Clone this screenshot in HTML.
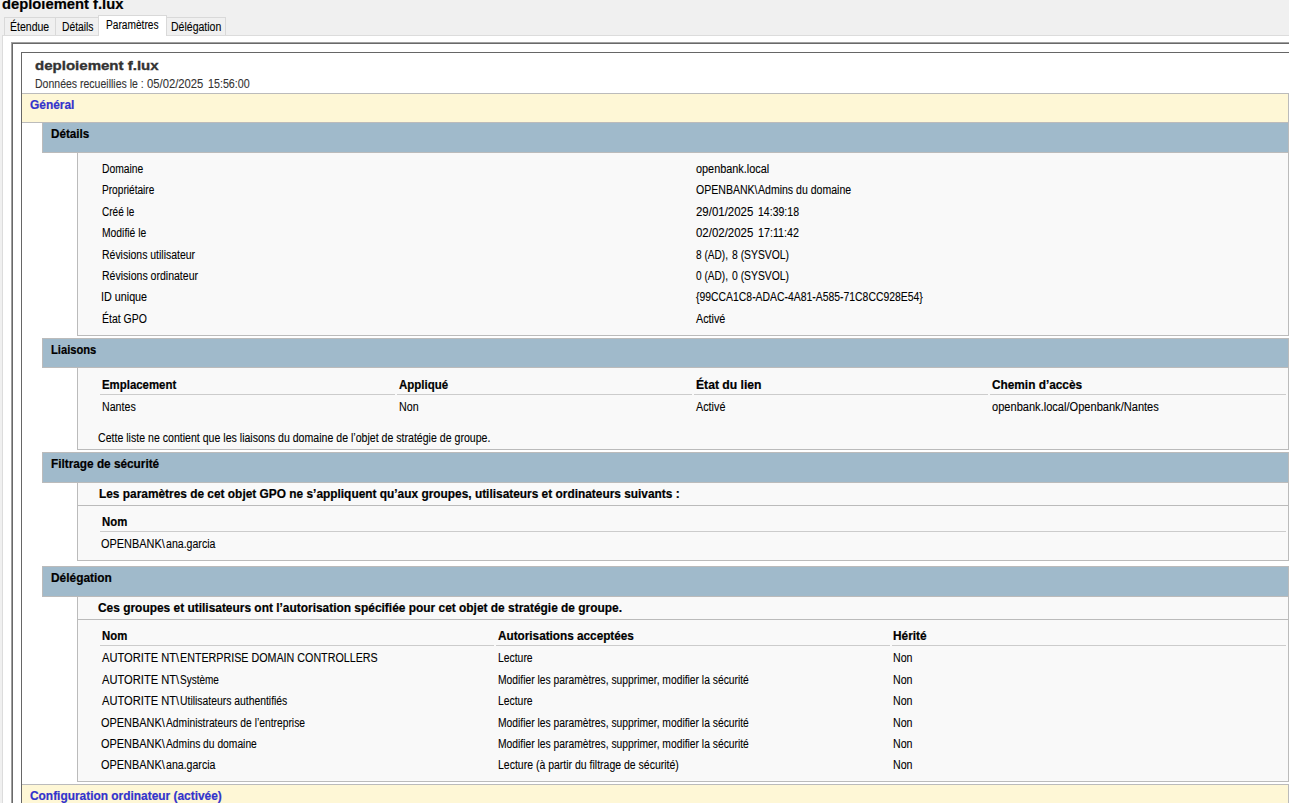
<!DOCTYPE html>
<html lang="fr">
<head>
<meta charset="utf-8">
<title>deploiement f.lux</title>
<style>
html,body{margin:0;padding:0;}
body{width:1289px;height:803px;overflow:hidden;position:relative;background:#f0f0f0;font-family:"Liberation Sans",sans-serif;font-size:12px;color:#000;}
div{position:absolute;box-sizing:border-box;}
.t{position:absolute;white-space:pre;transform-origin:0 0;font-size:12px;line-height:16px;color:#000;}
.t{-webkit-text-stroke:0.1px currentColor;}
.t.b{font-weight:bold;-webkit-text-stroke:0.2px currentColor;}
.t.gpo{-webkit-text-stroke:0.35px currentColor;}
.t.wt{font-size:15px;line-height:19px;}
.t.gpo{font-size:13.5px;line-height:17.5px;}
.t.gpo{color:#333;}
.t.dt{color:#333;}
.t.lnk{color:#3333cc;}
#text{left:0;top:0;z-index:5;}
/* tab control */
.tab{background:#f0f0f0;border:1px solid #d9d9d9;border-bottom:none;top:17px;height:18px;}
.tab.sel{background:#fff;top:15px;height:21px;z-index:2;}
#panel{left:2px;top:35px;width:1300px;height:800px;background:#fff;border:1px solid #dcdcdc;}
#frame{left:11px;top:42px;width:1300px;height:800px;border:1px solid #a0a0a0;background:#fff;box-shadow:inset 1px 1px 0 0 #696969;}
#doc{left:21px;top:52px;width:1300px;height:800px;border:1px solid #666;background:#fff;}
.he0{left:22px;width:1267px;height:30px;background:#fef7d6;border:1px solid #bbb;border-left:none;}
.he1{left:42px;width:1247px;height:30px;background:#a0bacb;border:1px solid #bbb;}
.box{left:77px;width:1212px;background:#f9f9f9;border:1px solid #bbb;}
.hr{height:1px;background:#ccc;}

</style>
</head>
<body>
<div class="tab" style="left:4px;width:52px"></div>
<div class="tab" style="left:55px;width:44px"></div>
<div class="tab" style="left:165px;width:61px"></div>
<div id="panel"></div>
<div class="tab sel" style="left:98px;width:69px"></div>
<div id="frame"></div>
<div id="doc"></div>
<div class="he0" style="top:93px"></div>
<div class="he1" style="top:122px;height:31px"></div>
<div class="box" style="top:152px;height:184px"></div>
<div class="he1" style="top:338px"></div>
<div class="box" style="top:367px;height:83px"></div>
<div class="hr" style="top:394px;left:100px;width:295px"></div>
<div class="hr" style="top:394px;left:397px;width:295px"></div>
<div class="hr" style="top:394px;left:694px;width:294px"></div>
<div class="hr" style="top:394px;left:990px;width:296px"></div>
<div class="he1" style="top:452px;height:31px"></div>
<div class="box" style="top:482px;height:24px"></div>
<div class="box" style="top:505px;height:56px"></div>
<div class="hr" style="top:531px;left:100px;width:1186px"></div>
<div class="he1" style="top:566px;height:31px"></div>
<div class="box" style="top:596px;height:24px"></div>
<div class="box" style="top:619px;height:163px"></div>
<div class="hr" style="top:645px;left:100px;width:394px"></div>
<div class="hr" style="top:645px;left:496px;width:394px"></div>
<div class="hr" style="top:645px;left:892px;width:394px"></div>
<div class="he0" style="top:784px"></div>

<div id="text">
<span class="t b wt" style="left:2.00px;top:-5.70px;transform:scaleX(0.9838)">deploiement f.lux</span>
<span class="t tb" style="left:9.80px;top:18.84px;transform:scaleX(0.8771)">Étendue</span>
<span class="t tb" style="left:62.00px;top:18.84px;transform:scaleX(0.8588)">Détails</span>
<span class="t tb" style="left:106.00px;top:16.84px;transform:scaleX(0.8465)">Paramètres</span>
<span class="t tb" style="left:170.80px;top:18.84px;transform:scaleX(0.8765)">Délégation</span>
<span class="t b gpo" style="left:34.80px;top:56.57px;transform:scaleX(1.1139)">deploiement f.lux</span>
<span class="g"><span class="t dt" style="left:34.80px;top:75.84px;transform:scaleX(0.8761)">Données recueillies le : </span><span class="t dt" style="left:147.20px;top:75.84px;transform:scaleX(0.9373)">05/02/2025 </span><span class="t dt" style="left:208.00px;top:75.84px;transform:scaleX(0.8929)">15:56:00</span></span>
<span class="t b lnk" style="left:30.40px;top:96.84px;transform:scaleX(0.9942)">Général</span>
<span class="t b" style="left:51.40px;top:125.84px;transform:scaleX(0.9728)">Détails</span>
<span class="t " style="left:101.70px;top:160.84px;transform:scaleX(0.8604)">Domaine</span>
<span class="t " style="left:695.70px;top:160.84px;transform:scaleX(0.9068)">openbank.local</span>
<span class="t " style="left:101.70px;top:181.84px;transform:scaleX(0.8436)">Propriétaire</span>
<span class="g"><span class="t " style="left:695.90px;top:181.84px;transform:scaleX(0.8785)">OPENBANK\</span><span class="t " style="left:758.10px;top:181.84px;transform:scaleX(0.8779)">Admins du domaine</span></span>
<span class="t " style="left:101.70px;top:203.84px;transform:scaleX(0.8383)">Créé le</span>
<span class="g"><span class="t " style="left:695.90px;top:203.84px;transform:scaleX(0.9539)">29/01/2025 </span><span class="t " style="left:757.60px;top:203.84px;transform:scaleX(0.8780)">14:39:18</span></span>
<span class="t " style="left:101.70px;top:224.84px;transform:scaleX(0.8610)">Modifié le</span>
<span class="g"><span class="t " style="left:695.90px;top:224.84px;transform:scaleX(0.9539)">02/02/2025 </span><span class="t " style="left:757.60px;top:224.84px;transform:scaleX(0.8950)">17:11:42</span></span>
<span class="t " style="left:101.70px;top:246.84px;transform:scaleX(0.8724)">Révisions utilisateur</span>
<span class="g"><span class="t " style="left:695.90px;top:246.84px;transform:scaleX(0.8415)">8 (AD), </span><span class="t " style="left:732.00px;top:246.84px;transform:scaleX(0.8633)">8 (SYSVOL)</span></span>
<span class="t " style="left:101.70px;top:267.84px;transform:scaleX(0.8776)">Révisions ordinateur</span>
<span class="g"><span class="t " style="left:695.90px;top:267.84px;transform:scaleX(0.8415)">0 (AD), </span><span class="t " style="left:732.00px;top:267.84px;transform:scaleX(0.8633)">0 (SYSVOL)</span></span>
<span class="t " style="left:100.80px;top:288.84px;transform:scaleX(0.8975)">ID unique</span>
<span class="t " style="left:695.70px;top:288.84px;transform:scaleX(0.8674)">{99CCA1C8-ADAC-4A81-A585-71C8CC928E54}</span>
<span class="t " style="left:101.70px;top:310.84px;transform:scaleX(0.8722)">État GPO</span>
<span class="t " style="left:695.70px;top:310.84px;transform:scaleX(0.8969)">Activé</span>
<span class="t b" style="left:51.40px;top:341.84px;transform:scaleX(0.9305)">Liaisons</span>
<span class="t b" style="left:101.90px;top:376.84px;transform:scaleX(0.9509)">Emplacement</span>
<span class="t b" style="left:398.60px;top:376.84px;transform:scaleX(0.9564)">Appliqué</span>
<span class="t b" style="left:695.90px;top:376.84px;transform:scaleX(1.0134)">État du lien</span>
<span class="t b" style="left:991.50px;top:376.84px;transform:scaleX(0.9859)">Chemin d’accès</span>
<span class="t " style="left:101.70px;top:398.84px;transform:scaleX(0.8863)">Nantes</span>
<span class="t " style="left:399.30px;top:398.84px;transform:scaleX(0.8904)">Non</span>
<span class="t " style="left:695.70px;top:398.84px;transform:scaleX(0.8999)">Activé</span>
<span class="t " style="left:991.70px;top:398.84px;transform:scaleX(0.9226)">openbank.local/Openbank/Nantes</span>
<span class="t " style="left:98.20px;top:429.84px;transform:scaleX(0.8819)">Cette liste ne contient que les liaisons du domaine de l’objet de stratégie de groupe.</span>
<span class="t b" style="left:51.10px;top:455.84px;transform:scaleX(0.9831)">Filtrage de sécurité</span>
<span class="t b" style="left:99.30px;top:485.84px;transform:scaleX(0.9907)">Les paramètres de cet objet GPO ne s’appliquent qu’aux groupes, utilisateurs et ordinateurs suivants :</span>
<span class="t b" style="left:102.20px;top:513.84px;transform:scaleX(0.9463)">Nom</span>
<span class="g"><span class="t " style="left:101.30px;top:535.84px;transform:scaleX(0.9097)">OPENBANK\</span><span class="t " style="left:165.50px;top:535.84px;transform:scaleX(0.8817)">ana.garcia</span></span>
<span class="t b" style="left:51.10px;top:569.84px;transform:scaleX(0.9916)">Délégation</span>
<span class="t b" style="left:98.20px;top:599.84px;transform:scaleX(0.9935)">Ces groupes et utilisateurs ont l’autorisation spécifiée pour cet objet de stratégie de groupe.</span>
<span class="t b" style="left:102.20px;top:627.84px;transform:scaleX(0.9463)">Nom</span>
<span class="t b" style="left:497.60px;top:627.84px;transform:scaleX(0.9796)">Autorisations acceptées</span>
<span class="t b" style="left:893.10px;top:627.84px;transform:scaleX(0.9872)">Hérité</span>
<span class="g"><span class="t " style="left:101.80px;top:649.84px;transform:scaleX(0.9286)">AUTORITE NT\</span><span class="t " style="left:179.70px;top:649.84px;transform:scaleX(0.8931)">ENTERPRISE DOMAIN CONTROLLERS</span></span>
<span class="t " style="left:498.20px;top:649.84px;transform:scaleX(0.8649)">Lecture</span>
<span class="t " style="left:893.40px;top:649.84px;transform:scaleX(0.8857)">Non</span>
<span class="g"><span class="t " style="left:101.80px;top:671.84px;transform:scaleX(0.9286)">AUTORITE NT\</span><span class="t " style="left:180.00px;top:671.84px;transform:scaleX(0.8339)">Système</span></span>
<span class="t " style="left:498.20px;top:671.84px;transform:scaleX(0.8587)">Modifier les paramètres, supprimer, modifier la sécurité</span>
<span class="t " style="left:893.40px;top:671.84px;transform:scaleX(0.8857)">Non</span>
<span class="g"><span class="t " style="left:101.80px;top:692.84px;transform:scaleX(0.9286)">AUTORITE NT\</span><span class="t " style="left:180.00px;top:692.84px;transform:scaleX(0.8649)">Utilisateurs authentifiés</span></span>
<span class="t " style="left:498.20px;top:692.84px;transform:scaleX(0.8649)">Lecture</span>
<span class="t " style="left:893.40px;top:692.84px;transform:scaleX(0.8857)">Non</span>
<span class="g"><span class="t " style="left:101.30px;top:714.84px;transform:scaleX(0.9097)">OPENBANK\</span><span class="t " style="left:166.00px;top:714.84px;transform:scaleX(0.8578)">Administrateurs de l’entreprise</span></span>
<span class="t " style="left:498.20px;top:714.84px;transform:scaleX(0.8587)">Modifier les paramètres, supprimer, modifier la sécurité</span>
<span class="t " style="left:893.40px;top:714.84px;transform:scaleX(0.8857)">Non</span>
<span class="g"><span class="t " style="left:101.30px;top:735.84px;transform:scaleX(0.9097)">OPENBANK\</span><span class="t " style="left:166.00px;top:735.84px;transform:scaleX(0.8563)">Admins du domaine</span></span>
<span class="t " style="left:498.20px;top:735.84px;transform:scaleX(0.8587)">Modifier les paramètres, supprimer, modifier la sécurité</span>
<span class="t " style="left:893.40px;top:735.84px;transform:scaleX(0.8857)">Non</span>
<span class="g"><span class="t " style="left:101.30px;top:756.84px;transform:scaleX(0.9097)">OPENBANK\</span><span class="t " style="left:165.50px;top:756.84px;transform:scaleX(0.8817)">ana.garcia</span></span>
<span class="t " style="left:498.20px;top:756.84px;transform:scaleX(0.8744)">Lecture (à partir du filtrage de sécurité)</span>
<span class="t " style="left:893.40px;top:756.84px;transform:scaleX(0.8857)">Non</span>
<span class="t b lnk" style="left:30.10px;top:787.84px;transform:scaleX(0.9920)">Configuration ordinateur (activée)</span>
</div>
</body>
</html>
